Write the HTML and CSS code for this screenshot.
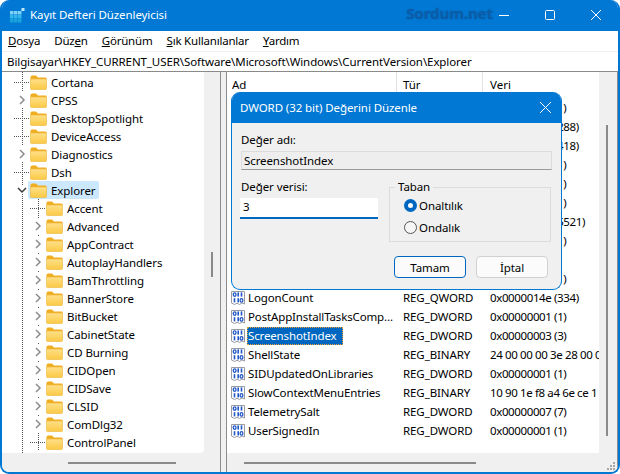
FILE: index.html
```html
<!DOCTYPE html>
<html lang="tr">
<head>
<meta charset="utf-8">
<title>Kayıt Defteri Düzenleyicisi</title>
<link rel="stylesheet" href="styles.css">
</head>
<body>
<svg class="defs" width="0" height="0">
  <defs>
    <linearGradient id="fg" x1="0" y1="0" x2="0" y2="1"><stop offset="0" stop-color="#fee08a"/><stop offset="1" stop-color="#fbc944"/></linearGradient>
    <symbol id="folder" viewBox="0 0 17 15">
      <path d="M0.5 2 Q0.5 0.5 2 0.5 H6 L8 2.5 H15.5 Q16.5 2.5 16.5 3.5 V5 H0.5 Z" fill="#f0ad1f"/>
      <path d="M0.5 4 H16.5 V13.5 Q16.5 14.5 15.5 14.5 H1.5 Q0.5 14.5 0.5 13.5 Z" fill="url(#fg)" stroke="#eeb53a" stroke-width=".6"/>
    </symbol>
    <symbol id="chev" viewBox="0 0 8 10"><path d="M2 1 L6 5 L2 9" fill="none" stroke="#8c8c8c" stroke-width="1.5"/></symbol>
    <symbol id="chevd" viewBox="0 0 10 8"><path d="M1 2 L5 6 L9 2" fill="none" stroke="#3a3a3a" stroke-width="1.5"/></symbol>
    <symbol id="reg" viewBox="0 0 16 16">
      <path d="M1.5 1.5 H14.5 V14 L12 13 L9.5 14.5 L7 13.2 L4.5 14.5 L1.5 13 Z" fill="#fff" stroke="#9a9aa2"/>
      <g fill="none" stroke="#1f57c8" stroke-width="1.3">
        <ellipse cx="4.6" cy="4.6" rx="1.4" ry="1.8"/>
        <ellipse cx="11.5" cy="10.4" rx="1.4" ry="1.8"/>
      </g>
      <g fill="#1f57c8">
        <rect x="7.4" y="2.4" width="1.6" height="4.2"/><rect x="10.7" y="2.4" width="1.6" height="4.2"/>
        <rect x="3.7" y="8.2" width="1.6" height="4.2"/><rect x="7.4" y="8.2" width="1.6" height="4.2"/>
      </g>
    </symbol>
  </defs>
</svg>
<div class="window">
  <header class="titlebar">
    <svg class="appicon" width="16" height="16" viewBox="0 0 16 16">
      <g fill="#7fd4f5"><rect x="0" y="4" width="3.5" height="3.5"/><rect x="4" y="4" width="3.5" height="3.5"/><rect x="8" y="4" width="3.5" height="3.5"/></g>
      <g fill="#33b6ea"><rect x="0" y="8" width="3.5" height="3.5"/><rect x="4" y="8" width="3.5" height="3.5"/><rect x="8" y="8" width="3.5" height="3.5"/></g>
      <g fill="#19a3dd"><rect x="0" y="12" width="3.5" height="3.5"/><rect x="4" y="12" width="3.5" height="3.5"/><rect x="8" y="12" width="3.5" height="3.5"/></g>
      <rect x="11.5" y="1" width="3" height="3" fill="#bfeaf9"/>
    </svg>
    <span class="apptitle">Kayıt Defteri Düzenleyicisi</span>
    <span class="brand">Sordum.net</span>
    <div class="controls">
      <svg width="10" height="10" viewBox="0 0 10 10"><path d="M0 5.5H10" stroke="#fff"/></svg>
      <svg width="10" height="10" viewBox="0 0 10 10"><rect x=".5" y=".5" width="9" height="9" rx="1" fill="none" stroke="#fff"/></svg>
      <svg width="10" height="10" viewBox="0 0 10 10"><path d="M0 0L10 10M10 0L0 10" stroke="#fff"/></svg>
    </div>
  </header>
  <nav class="menu">
    <span><u>D</u>osya</span><span>Düz<u>e</u>n</span><span><u>G</u>örünüm</span><span><u>S</u>ık Kullanılanlar</span><span><u>Y</u>ardım</span>
  </nav>
  <div class="address">Bilgisayar\HKEY_CURRENT_USER\Software\Microsoft\Windows\CurrentVersion\Explorer</div>
  <main class="split">
    <section class="pane treepane">
      <div class="pane-main">
        <div class="pane-view tree">
          <div class="node"><span class="twist leaf"></span><svg class="fld"><use href="#folder"/></svg><span class="lbl">Cortana</span></div>
          <div class="node"><span class="twist"><svg class="chev"><use href="#chev"/></svg></span><svg class="fld"><use href="#folder"/></svg><span class="lbl">CPSS</span></div>
          <div class="node"><span class="twist leaf"></span><svg class="fld"><use href="#folder"/></svg><span class="lbl">DesktopSpotlight</span></div>
          <div class="node"><span class="twist leaf"></span><svg class="fld"><use href="#folder"/></svg><span class="lbl">DeviceAccess</span></div>
          <div class="node"><span class="twist"><svg class="chev"><use href="#chev"/></svg></span><svg class="fld"><use href="#folder"/></svg><span class="lbl">Diagnostics</span></div>
          <div class="node"><span class="twist leaf"></span><svg class="fld"><use href="#folder"/></svg><span class="lbl">Dsh</span></div>
          <div class="node"><span class="twist"><svg class="chevd"><use href="#chevd"/></svg></span><span class="picked"><svg class="fld"><use href="#folder"/></svg><span class="lbl">Explorer</span></span></div>
          <div class="children">
            <div class="node"><span class="twist leaf"></span><svg class="fld"><use href="#folder"/></svg><span class="lbl">Accent</span></div>
            <div class="node"><span class="twist"><svg class="chev"><use href="#chev"/></svg></span><svg class="fld"><use href="#folder"/></svg><span class="lbl">Advanced</span></div>
            <div class="node"><span class="twist"><svg class="chev"><use href="#chev"/></svg></span><svg class="fld"><use href="#folder"/></svg><span class="lbl">AppContract</span></div>
            <div class="node"><span class="twist"><svg class="chev"><use href="#chev"/></svg></span><svg class="fld"><use href="#folder"/></svg><span class="lbl">AutoplayHandlers</span></div>
            <div class="node"><span class="twist"><svg class="chev"><use href="#chev"/></svg></span><svg class="fld"><use href="#folder"/></svg><span class="lbl">BamThrottling</span></div>
            <div class="node"><span class="twist"><svg class="chev"><use href="#chev"/></svg></span><svg class="fld"><use href="#folder"/></svg><span class="lbl">BannerStore</span></div>
            <div class="node"><span class="twist"><svg class="chev"><use href="#chev"/></svg></span><svg class="fld"><use href="#folder"/></svg><span class="lbl">BitBucket</span></div>
            <div class="node"><span class="twist"><svg class="chev"><use href="#chev"/></svg></span><svg class="fld"><use href="#folder"/></svg><span class="lbl">CabinetState</span></div>
            <div class="node"><span class="twist"><svg class="chev"><use href="#chev"/></svg></span><svg class="fld"><use href="#folder"/></svg><span class="lbl">CD Burning</span></div>
            <div class="node"><span class="twist"><svg class="chev"><use href="#chev"/></svg></span><svg class="fld"><use href="#folder"/></svg><span class="lbl">CIDOpen</span></div>
            <div class="node"><span class="twist"><svg class="chev"><use href="#chev"/></svg></span><svg class="fld"><use href="#folder"/></svg><span class="lbl">CIDSave</span></div>
            <div class="node"><span class="twist"><svg class="chev"><use href="#chev"/></svg></span><svg class="fld"><use href="#folder"/></svg><span class="lbl">CLSID</span></div>
            <div class="node"><span class="twist"><svg class="chev"><use href="#chev"/></svg></span><svg class="fld"><use href="#folder"/></svg><span class="lbl">ComDlg32</span></div>
            <div class="node"><span class="twist leaf"></span><svg class="fld"><use href="#folder"/></svg><span class="lbl">ControlPanel</span></div>
          </div>
        </div>
        <div class="vscroll vscroll-tree"><i></i></div>
      </div>
      <div class="hscroll hscroll-tree"><i></i></div>
    </section>
    <section class="pane listpane">
      <div class="pane-main">
        <div class="pane-view list">
          <div class="row head"><span class="c1">Ad</span><span class="c2">Tür</span><span class="c3">Veri</span></div>
          <div class="row"><span class="c1"></span><span class="c2"></span><span class="c3">0x00000001 (1)</span></div>
          <div class="row"><span class="c1"></span><span class="c2"></span><span class="c3">0x00000120 (288)</span></div>
          <div class="row"><span class="c1"></span><span class="c2"></span><span class="c3">0x000001a2 (418)</span></div>
          <div class="row"><span class="c1"></span><span class="c2"></span><span class="c3">0x00000001 (1)</span></div>
          <div class="row"><span class="c1"></span><span class="c2"></span><span class="c3">0x00000001 (1)</span></div>
          <div class="row"><span class="c1"></span><span class="c2"></span><span class="c3">0x00000001 (1)</span></div>
          <div class="row"><span class="c1"></span><span class="c2"></span><span class="c3">0x00001591 (5521)</span></div>
          <div class="row"><span class="c1"></span><span class="c2"></span><span class="c3">0x00000001 (1)</span></div>
          <div class="row"><span class="c1"></span><span class="c2"></span><span class="c3"></span></div>
          <div class="row"><span class="c1"></span><span class="c2"></span><span class="c3">0x00000001 (1)</span></div>
          <div class="row"><span class="c1"><svg class="ric"><use href="#reg"/></svg><span class="nm">LogonCount</span></span><span class="c2">REG_QWORD</span><span class="c3">0x0000014e (334)</span></div>
          <div class="row"><span class="c1"><svg class="ric"><use href="#reg"/></svg><span class="nm">PostAppInstallTasksComp...</span></span><span class="c2">REG_DWORD</span><span class="c3">0x00000001 (1)</span></div>
          <div class="row"><span class="c1"><svg class="ric"><use href="#reg"/></svg><span class="nm selected">ScreenshotIndex</span></span><span class="c2">REG_DWORD</span><span class="c3">0x00000003 (3)</span></div>
          <div class="row"><span class="c1"><svg class="ric"><use href="#reg"/></svg><span class="nm">ShellState</span></span><span class="c2">REG_BINARY</span><span class="c3">24 00 00 00 3e 28 00 00 00</span></div>
          <div class="row"><span class="c1"><svg class="ric"><use href="#reg"/></svg><span class="nm">SIDUpdatedOnLibraries</span></span><span class="c2">REG_DWORD</span><span class="c3">0x00000001 (1)</span></div>
          <div class="row"><span class="c1"><svg class="ric"><use href="#reg"/></svg><span class="nm">SlowContextMenuEntries</span></span><span class="c2">REG_BINARY</span><span class="c3">10 90 1e f8 a4 6e ce 1</span></div>
          <div class="row"><span class="c1"><svg class="ric"><use href="#reg"/></svg><span class="nm">TelemetrySalt</span></span><span class="c2">REG_DWORD</span><span class="c3">0x00000007 (7)</span></div>
          <div class="row"><span class="c1"><svg class="ric"><use href="#reg"/></svg><span class="nm">UserSignedIn</span></span><span class="c2">REG_DWORD</span><span class="c3">0x00000001 (1)</span></div>
        </div>
        <div class="vscroll vscroll-list"><i></i></div>
      </div>
      <div class="hscroll hscroll-list"><i></i>
        <svg class="grip" width="9" height="9" viewBox="0 0 9 9"><g fill="#a8a8a8"><rect x="6" y="0" width="2" height="2"/><rect x="3" y="3" width="2" height="2"/><rect x="6" y="3" width="2" height="2"/><rect x="0" y="6" width="2" height="2"/><rect x="3" y="6" width="2" height="2"/><rect x="6" y="6" width="2" height="2"/></g></svg>
      </div>
    </section>
  </main>
  <div class="dialog">
    <div class="dlg-title"><span>DWORD (32 bit) Değerini Düzenle</span>
      <svg width="11" height="11" viewBox="0 0 11 11"><path d="M0 0L11 11M11 0L0 11" stroke="#fff"/></svg>
    </div>
    <div class="dlg-body">
      <div class="dlg-label">Değer adı:</div>
      <div class="dlg-name">ScreenshotIndex</div>
      <div class="dlg-cols">
        <div class="dlg-left">
          <div class="dlg-label">Değer verisi:</div>
          <div class="dlg-input">3</div>
        </div>
        <fieldset class="dlg-group">
          <legend>Taban</legend>
          <div class="radio"><span class="dot on"></span>Onaltılık</div>
          <div class="radio"><span class="dot"></span>Ondalık</div>
        </fieldset>
      </div>
      <div class="dlg-btns"><span class="btn primary">Tamam</span><span class="btn">İptal</span></div>
    </div>
  </div>
</div>
</body>
</html>
```

FILE: styles.css
```css
* { box-sizing: border-box; }
html, body { margin: 0; padding: 0; background: #fff; }
body { width: 620px; height: 474px; overflow: hidden; font-family: "Noto Sans", "Liberation Sans", sans-serif; font-size: 11.5px; letter-spacing: -.09px; color: #000; }
.defs { position: absolute; }
u { text-underline-offset: 1px; }

.window { position: relative; width: 620px; height: 474px; display: flex; flex-direction: column; background: #f0f0f0; border: 2px solid #0078d4; border-top: 0; border-radius: 9px; overflow: hidden; }

.titlebar { height: 31px; flex: none; margin: 0 -2px; background: #0078d4; display: flex; align-items: center; color: #fff; padding: 0 0 2px 10px; }
.appicon { flex: none; margin-right: 4px; }
.apptitle { font-size: 11.5px; }
.brand { margin: 0 6px 3px auto; font-size: 15px; font-weight: 700; letter-spacing: -.05px; color: #0a5da8; text-shadow: 0 0 1.5px #0a5da8; }
.controls { display: flex; gap: 36px; padding-right: 19px; align-items: center; }
.controls svg { display: block; }

.menu { height: 20px; flex: none; background: #fff; display: flex; align-items: center; gap: 14px; padding: 0 0 1px 6px; letter-spacing: -.2px; }
.address { height: 20px; flex: none; margin-top: 1px; background: #fff; border-bottom: 1px solid #8a8a8a; display: flex; align-items: center; padding-left: 5px; }

.split { flex: 1; min-height: 0; display: flex; gap: 5px; }
.pane { display: flex; flex-direction: column; min-height: 0; border-right: 1px solid #8c8c8c; }
.treepane { width: 219px; flex: none; }
.listpane { flex: 1; border-left: 1px solid #8c8c8c; border-right: 1px solid #8c8c8c; min-width: 0; }
.pane-main { flex: 1; min-height: 0; display: flex; }
.pane-view { flex: 1; min-width: 0; background: #fff; overflow: hidden; }

.tree { padding-top: 1px; background: #fff linear-gradient(#555 50%, transparent 50%) 20px 0 / 1px 2px repeat-y; border-radius: 0 0 4px 0; }
.children { background: linear-gradient(#555 50%, transparent 50%) 36px 0 / 1px 2px repeat-y; padding-left: 16px; }
.node { height: 18px; display: flex; align-items: center; padding-left: 12px; }
.twist { width: 16px; height: 18px; flex: none; display: flex; align-items: center; justify-content: center; }
.leaf { background: linear-gradient(to right, #555 50%, transparent 50%) 8px 9px / 2px 1px repeat-x; }
.chev { width: 8px; height: 10px; background: #fff; box-sizing: content-box; padding: 3px 0; }
.chevd { width: 10px; height: 8px; background: #fff; }
.fld { width: 17px; height: 15px; flex: none; }
.lbl { margin-left: 4px; white-space: nowrap; }
.picked { display: flex; align-items: center; height: 18px; margin-left: -2px; padding: 0 3px 0 2px; background: #cce8ff; border-radius: 2px; }

.vscroll { width: 18px; flex: none; background: #f0f0f0; position: relative; }
.vscroll i { position: absolute; left: 7px; width: 2px; background: #8a8a8a; display: block; }
.vscroll-tree { width: 16px; }
.vscroll-tree i { top: 180px; height: 25px; }
.vscroll-list i { top: 53px; height: 311px; }
.hscroll { height: 19px; flex: none; background: #f0f0f0; position: relative; }
.hscroll i { position: absolute; top: 9px; height: 2px; background: #8a8a8a; display: block; }
.hscroll-tree i { left: 66px; width: 108px; }
.hscroll-list i { left: 17px; width: 232px; }
.grip { position: absolute; right: 1px; bottom: 1px; }

.row { height: 19px; display: flex; align-items: center; white-space: nowrap; }
.row.head { height: 26px; align-items: flex-start; }
.c1 { width: 170px; flex: none; display: flex; align-items: center; padding-left: 3px; }
.head .c1 { padding-left: 5px; }
.c2 { width: 86px; flex: none; padding-left: 6px; }
.c3 { flex: 1; min-width: 0; padding-left: 7px; overflow: hidden; letter-spacing: -.38px; }
.head span { height: 24px; line-height: 25px; border-right: 1px solid #e3e3e3; }
.head .c3 { border-right: 0; letter-spacing: normal; }
.ric { width: 16px; height: 16px; flex: none; }
.nm { margin-left: 1px; padding: 0 1px; height: 18px; line-height: 18px; letter-spacing: -.14px; }
.selected { background: #0067c0; color: #fff; outline: 1px dotted #f0a030; outline-offset: -1px; padding: 0 3px 0 1px; width: 96px; }

.dialog { position: absolute; left: 229px; top: 92px; width: 331px; height: 198px; background: #f0f0f0; border: 1.5px solid #0078d4; border-top: 0; border-radius: 9px; display: flex; flex-direction: column; overflow: hidden; }
.dlg-title { height: 31px; flex: none; margin: 0 -2px; padding: 0 12px 1px 10px; background: #0078d4; color: #fff; display: flex; align-items: center; justify-content: space-between; }
.dlg-body { flex: 1; padding: 8px 9px 0 9px; display: flex; flex-direction: column; }
.dlg-label { height: 18px; line-height: 18px; }
.dlg-name { height: 19px; margin-top: 2px; background: #eeeeee; border: 1px solid #dcdcdc; border-bottom-color: #9a9a9a; padding-left: 2px; line-height: 17px; }
.dlg-cols { display: flex; margin-top: 8px; }
.dlg-left { width: 148px; flex: none; }
.dlg-input { width: 138px; height: 21px; margin: 2px 0 0 -1px; padding-left: 3px; line-height: 18px; background: #fff; border-bottom: 2px solid #0067c0; }
.dlg-group { width: 162px; height: 62px; margin: 2px 0 0 0; padding: 0 0 0 14px; border: 1px solid #dcdcdc; }
.dlg-group legend { padding: 0 3px; margin-left: -9px; line-height: 14px; }
.radio { height: 22px; display: flex; align-items: center; }
.dot { width: 13px; height: 13px; margin-right: 2px; border-radius: 50%; border: 1px solid #555; background: #f6f6f6; flex: none; }
.dot.on { border: 4px solid #0067c0; background: #fff; }
.dlg-btns { display: flex; gap: 10px; margin: 14px 0 0 153px; }
.btn { width: 72px; height: 22px; background: #fbfbfb; border: 1px solid #d0d0d0; border-radius: 4px; display: flex; align-items: center; justify-content: center; }
.btn.primary { border-color: #0067c0; }
```
